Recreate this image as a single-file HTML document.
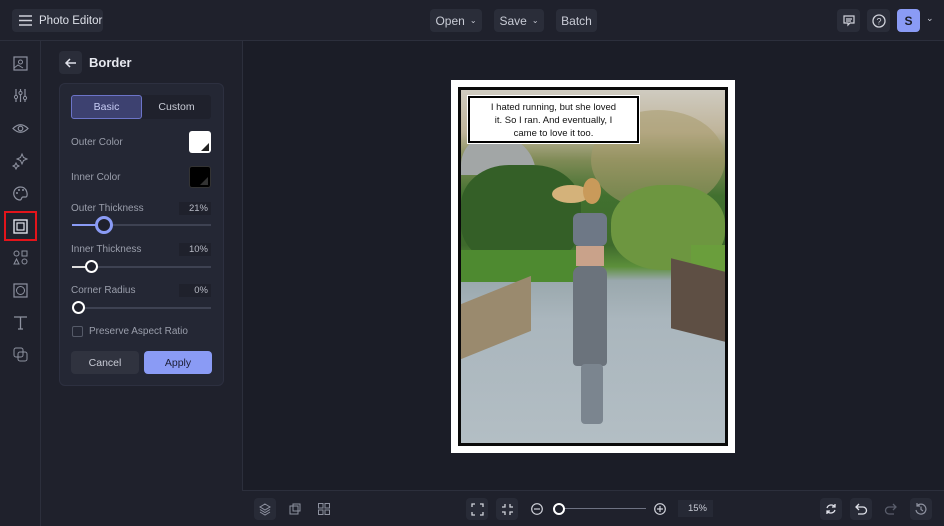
<!DOCTYPE html>
<html><head><meta charset="utf-8"><style>
*{margin:0;padding:0;box-sizing:border-box}
body{width:944px;height:526px;background:#1b1d27;font-family:"Liberation Sans",sans-serif;color:#d6d8e0;position:relative;overflow:hidden;font-size:11px}
.top{position:absolute;left:0;top:0;width:944px;height:41px;background:#1f212c;border-bottom:1px solid #2c2f3c}
.btn{position:absolute;background:#2a2d39;border-radius:4px;color:#c9ccd6;font-size:12px;display:flex;align-items:center;justify-content:center;white-space:nowrap}
.side{position:absolute;left:0;top:41px;width:41px;height:485px;background:#1f212c;border-right:1px solid #2c2f3c}
.panel{position:absolute;left:41px;top:41px;width:202px;height:485px;background:#1f212c;border-right:1px solid #2c2f3c}
.card{position:absolute;left:59px;top:83px;width:165px;height:303px;background:#242734;border:1px solid #2d3040;border-radius:6px}
.lbl{position:absolute;left:71px;color:#9a9eab;font-size:10px}
.val{position:absolute;left:179px;width:32px;height:13px;background:#1f212c;color:#b8bbc6;font-size:9.5px;text-align:right;padding-right:3px;line-height:13px}
.track{position:absolute;left:72px;width:139px;height:2px;background:#3e4252}
.knob{position:absolute;border-radius:50%;background:#1f212c;border:2px solid #fff}
.bot{position:absolute;left:242px;top:490px;width:702px;height:36px;background:#1f212c;border-top:1px solid #2c2f3c}
.ib{position:absolute;width:22px;height:22px;background:#282b37;border-radius:4px}
.ico{position:absolute;left:12px;width:17px;height:17px}
svg{overflow:visible}
</style></head><body>
<div class="top">
 <div class="btn" style="left:12px;top:9px;width:91px;height:23px;justify-content:flex-start;padding-left:7px">
  <svg width="13" height="11" viewBox="0 0 13 11"><path d="M0 1H13M0 5.5H13M0 10H13" stroke="#d0d2da" stroke-width="1.4"/></svg>
  <span style="margin-left:7px;color:#dde0e8;font-size:11.5px">Photo Editor</span></div>
 <div class="btn" style="left:430px;top:9px;width:52px;height:23px">Open <span style="font-size:8px;margin-left:5px">⌄</span></div>
 <div class="btn" style="left:494px;top:9px;width:50px;height:23px">Save <span style="font-size:8px;margin-left:5px">⌄</span></div>
 <div class="btn" style="left:556px;top:9px;width:41px;height:23px">Batch</div>
 <div class="btn" style="left:837px;top:9px;width:23px;height:23px"><svg width="12" height="12" viewBox="0 0 12 12"><path d="M1 1H11V8H7L5 10V8H1Z M3 4H9M3 6H8" fill="none" stroke="#d0d2da" stroke-width="1.2"/></svg></div>
 <div class="btn" style="left:867px;top:9px;width:23px;height:23px"><svg width="14" height="14"><circle cx="7" cy="7" r="6" fill="none" stroke="#d0d2da" stroke-width="1.3"/><text x="7" y="10.5" font-size="9" text-anchor="middle" fill="#d0d2da" font-family="Liberation Sans">?</text></svg></div>
 <div class="btn" style="left:897px;top:9px;width:23px;height:23px;background:#8a9bf5;color:#1b1d27;font-weight:bold;font-size:12px">S</div>
 <div style="position:absolute;left:926px;top:13px;font-size:9px;color:#c9ccd6">⌄</div>
</div>
<div class="side">
 <svg class="ico" style="top:14px" viewBox="0 0 17 17"><rect x="2" y="2" width="13" height="13" fill="none" stroke="#8e92a0" stroke-width="1.2"/><circle cx="8.5" cy="7" r="2" fill="none" stroke="#8e92a0"/><path d="M2 13L6 10L11 13" fill="none" stroke="#8e92a0"/></svg>
 <svg class="ico" style="top:46px" viewBox="0 0 17 17"><path d="M4 2V15M8.5 2V15M13 2V15" stroke="#8e92a0" stroke-width="1.2"/><circle cx="4" cy="10" r="1.6" fill="#1f212c" stroke="#8e92a0"/><circle cx="8.5" cy="6" r="1.6" fill="#1f212c" stroke="#8e92a0"/><circle cx="13" cy="11" r="1.6" fill="#1f212c" stroke="#8e92a0"/></svg>
 <svg class="ico" style="top:79px" viewBox="0 0 17 17"><path d="M1 8.5Q8.5 1 16 8.5Q8.5 16 1 8.5Z" fill="none" stroke="#8e92a0" stroke-width="1.2"/><circle cx="8.5" cy="8.5" r="2.3" fill="none" stroke="#8e92a0" stroke-width="1.2"/></svg>
 <svg class="ico" style="top:111px" viewBox="0 0 17 17"><path d="M10 2L11.5 5.5L15 7L11.5 8.5L10 12L8.5 8.5L5 7L8.5 5.5Z M4 11L5 13L7 14L5 15L4 17L3 15L1 14L3 13Z" fill="none" stroke="#8e92a0"/></svg>
 <svg class="ico" style="top:144px" viewBox="0 0 17 17"><path d="M8.5 2A6.5 6.5 0 1 0 8 15C10 15 9 12 11 12H14C16 12 16 2 8.5 2Z" fill="none" stroke="#8e92a0" stroke-width="1.2"/><circle cx="5" cy="8" r="1" fill="#8e92a0"/><circle cx="7" cy="5" r="1" fill="#8e92a0"/><circle cx="11" cy="5" r="1" fill="#8e92a0"/></svg>
 <div style="position:absolute;left:4px;top:170px;width:33px;height:30px;border:2px solid #e3141b"></div>
 <svg class="ico" style="top:177px" viewBox="0 0 17 17"><rect x="2" y="2" width="13" height="13" fill="none" stroke="#e0e2ea" stroke-width="1.4"/><rect x="5" y="5" width="7" height="7" fill="none" stroke="#e0e2ea" stroke-width="1.2"/></svg>
 <svg class="ico" style="top:208px" viewBox="0 0 17 17"><circle cx="4.5" cy="4.5" r="2.5" fill="none" stroke="#8e92a0"/><rect x="10" y="2" width="5" height="5" fill="none" stroke="#8e92a0"/><path d="M4.5 10L7 15H2Z" fill="none" stroke="#8e92a0"/><circle cx="12.5" cy="12.5" r="2.5" fill="none" stroke="#8e92a0"/></svg>
 <svg class="ico" style="top:241px" viewBox="0 0 17 17"><rect x="2" y="2" width="13" height="13" fill="none" stroke="#8e92a0" stroke-width="1.2"/><circle cx="8.5" cy="8.5" r="4" fill="none" stroke="#8e92a0"/></svg>
 <svg class="ico" style="top:273px" viewBox="0 0 17 17"><path d="M2 3H15M8.5 3V15M6 15H11" fill="none" stroke="#8e92a0" stroke-width="1.3"/></svg>
 <svg class="ico" style="top:305px" viewBox="0 0 17 17"><rect x="2" y="2" width="9" height="9" rx="2" fill="none" stroke="#8e92a0"/><rect x="6" y="6" width="9" height="9" rx="2" fill="none" stroke="#8e92a0"/></svg>
</div>
<div class="panel"></div>
<div class="btn" style="left:59px;top:51px;width:23px;height:23px"><svg width="12" height="10" viewBox="0 0 12 10"><path d="M11 5H1M5 1L1 5L5 9" fill="none" stroke="#e0e2ea" stroke-width="1.5"/></svg></div>
<div style="position:absolute;left:89px;top:55px;font-size:13px;font-weight:bold;color:#e6e8ef">Border</div>
<div class="card"></div>
<div style="position:absolute;left:71px;top:95px;width:140px;height:24px;background:#1f212c;border-radius:3px"></div>
<div style="position:absolute;left:71px;top:95px;width:71px;height:24px;background:#3d4170;border:1px solid #6c74c8;border-radius:3px;color:#c8cdf5;font-size:10.5px;text-align:center;line-height:22px">Basic</div>
<div style="position:absolute;left:142px;top:95px;width:69px;height:24px;color:#c9ccd6;font-size:10.5px;text-align:center;line-height:24px">Custom</div>
<div class="lbl" style="top:137px">Outer Color</div>
<div style="position:absolute;left:189px;top:131px;width:22px;height:22px;background:#fff;border-radius:3px;overflow:hidden"><div style="position:absolute;right:2px;bottom:2px;width:0;height:0;border-left:8px solid transparent;border-bottom:8px solid #222"></div></div>
<div class="lbl" style="top:172px">Inner Color</div>
<div style="position:absolute;left:189px;top:166px;width:22px;height:22px;background:#000;border-radius:3px;border:1px solid #333"><div style="position:absolute;right:2px;bottom:2px;width:0;height:0;border-left:8px solid transparent;border-bottom:8px solid #333"></div></div>
<div class="lbl" style="top:203px">Outer Thickness</div><div class="val" style="top:202px">21%</div>
<div class="track" style="top:224px"></div><div class="track" style="top:224px;width:32px;background:#8a9bf5"></div>
<div class="knob" style="left:95px;top:216px;width:18px;height:18px;border:3px solid #8a9bf5"></div>
<div class="lbl" style="top:244px">Inner Thickness</div><div class="val" style="top:243px">10%</div>
<div class="track" style="top:266px"></div><div class="track" style="top:266px;width:16px;background:#ddd"></div>
<div class="knob" style="left:85px;top:260px;width:13px;height:13px"></div>
<div class="lbl" style="top:285px">Corner Radius</div><div class="val" style="top:284px">0%</div>
<div class="track" style="top:307px"></div>
<div class="knob" style="left:72px;top:301px;width:13px;height:13px"></div>
<div style="position:absolute;left:72px;top:326px;width:11px;height:11px;border:1px solid #555a68;border-radius:2px"></div>
<div class="lbl" style="left:89px;top:326px">Preserve Aspect Ratio</div>
<div class="btn" style="left:71px;top:351px;width:68px;height:23px;background:#30333f;font-size:10.5px">Cancel</div>
<div class="btn" style="left:144px;top:351px;width:68px;height:23px;background:#8a9bf5;color:#1b1d35;font-size:10.5px">Apply</div>

<div style="position:absolute;left:451px;top:80px;width:284px;height:373px;background:#fff"></div>
<div style="position:absolute;left:458px;top:87px;width:270px;height:359px;background:#0a0a0a"></div>
<div style="position:absolute;left:461px;top:90px;width:264px;height:353px;overflow:hidden;background:linear-gradient(180deg,#cfcbc0 0%,#bfb49a 12%,#7e8a55 20%,#41702f 30%,#3e6a2c 44%,#5c8f3a 50%,#9aa8ad 54%,#aab6bd 65%,#b3bec4 100%)">
 <div style="position:absolute;left:0;top:45px;width:75px;height:40px;background:#a2a6a6;border-radius:30px 40px 0 0"></div>
 <div style="position:absolute;left:0;top:75px;width:120px;height:100px;background:#345f27;border-radius:40%"></div>
 <div style="position:absolute;left:130px;top:20px;width:134px;height:100px;background:#a89a6c;border-radius:50%;opacity:.55"></div>
 <div style="position:absolute;left:150px;top:95px;width:114px;height:85px;background:#6d9640;border-radius:45%"></div>
 <div style="position:absolute;left:0;top:160px;width:130px;height:32px;background:#4e8a30"></div>
 <div style="position:absolute;left:230px;top:155px;width:34px;height:35px;background:#6a9e3c"></div>
 <div style="position:absolute;left:210px;top:175px;width:54px;height:70px;background:#5e4f44;transform:skewY(14deg)"></div>
 <div style="position:absolute;left:0;top:200px;width:70px;height:55px;background:#9a8a6e;transform:skewY(-22deg)"></div>
 <div style="position:absolute;left:91px;top:95px;width:38px;height:18px;background:#d4b27a;border-radius:50%"></div>
 <div style="position:absolute;left:122px;top:88px;width:18px;height:26px;background:#c99a5a;border-radius:50%"></div>
 <div style="position:absolute;left:112px;top:123px;width:34px;height:33px;background:#6e7886;border-radius:6px"></div>
 <div style="position:absolute;left:115px;top:156px;width:28px;height:20px;background:#c9a28a"></div>
 <div style="position:absolute;left:112px;top:176px;width:34px;height:100px;background:#6b737c;border-radius:8px 8px 4px 4px"></div>
 <div style="position:absolute;left:120px;top:274px;width:22px;height:60px;background:#7b858f;border-radius:4px"></div>
</div>
<div style="position:absolute;left:468px;top:96px;width:171px;height:47px;background:#fff;border:2px solid #000;outline:1px solid #fff;color:#111;font-size:9.5px;text-align:center;line-height:13px;padding-top:3px;white-space:nowrap">I hated running, but she loved<br>it. So I ran. And eventually, I<br>came to love it too.</div>

<div class="bot">
 <div class="ib" style="left:12px;top:7px"></div><div class="ib" style="left:41px;top:7px;background:none"></div><div class="ib" style="left:71px;top:7px;background:none"></div>
 <svg style="position:absolute;left:17px;top:12px" width="12" height="12" viewBox="0 0 12 12"><path d="M6 1L11 4L6 7L1 4Z M1 6.5L6 9.5L11 6.5M1 9L6 12L11 9" fill="none" stroke="#8e92a0"/></svg>
 <svg style="position:absolute;left:47px;top:12px" width="12" height="12"><rect x="1" y="3" width="8" height="8" fill="none" stroke="#8e92a0"/><rect x="4" y="1" width="7" height="7" fill="none" stroke="#8e92a0"/></svg>
 <svg style="position:absolute;left:76px;top:12px" width="12" height="12"><rect x="0.5" y="0.5" width="4.5" height="4.5" fill="none" stroke="#8e92a0"/><rect x="7" y="0.5" width="4.5" height="4.5" fill="none" stroke="#8e92a0"/><rect x="0.5" y="7" width="4.5" height="4.5" fill="none" stroke="#8e92a0"/><rect x="7" y="7" width="4.5" height="4.5" fill="none" stroke="#8e92a0"/></svg>
 <div class="ib" style="left:224px;top:7px"></div><div class="ib" style="left:254px;top:7px"></div>
 <svg style="position:absolute;left:230px;top:13px" width="11" height="11"><path d="M0 3V0H3M8 0H11V3M11 8V11H8M3 11H0V8" fill="none" stroke="#d0d2da" stroke-width="1.3"/></svg>
 <svg style="position:absolute;left:260px;top:13px" width="11" height="11"><path d="M0 3H3V0M8 0V3H11M11 8H8V11M3 11V8H0" fill="none" stroke="#d0d2da" stroke-width="1.3"/></svg>
 <svg style="position:absolute;left:289px;top:12px" width="12" height="12"><circle cx="6" cy="6" r="5.3" fill="none" stroke="#d0d2da" stroke-width="1.2"/><path d="M3 6H9" stroke="#d0d2da" stroke-width="1.2"/></svg>
 <div style="position:absolute;left:318px;top:17px;width:86px;height:1px;background:#6e7282"></div>
 <div style="position:absolute;left:311px;top:12px;width:12px;height:12px;border:2px solid #fff;border-radius:50%;background:#1f212c"></div>
 <svg style="position:absolute;left:412px;top:12px" width="12" height="12"><circle cx="6" cy="6" r="5.3" fill="none" stroke="#d0d2da" stroke-width="1.2"/><path d="M3 6H9M6 3V9" stroke="#d0d2da" stroke-width="1.2"/></svg>
 <div style="position:absolute;left:436px;top:9px;width:35px;height:17px;background:#262935;color:#c9ccd6;font-size:9.5px;text-align:right;padding-right:6px;line-height:17px">15%</div>
 <div class="ib" style="left:578px;top:7px"></div><div class="ib" style="left:608px;top:7px"></div><div class="ib" style="left:638px;top:7px;background:none"></div><div class="ib" style="left:668px;top:7px"></div>
 <svg style="position:absolute;left:583px;top:12px" width="12" height="12"><path d="M10 4A4.5 4.5 0 0 0 2 5M2 8A4.5 4.5 0 0 0 10 7M10 1V4H7M2 11V8H5" fill="none" stroke="#e0e2ea" stroke-width="1.3"/></svg>
 <svg style="position:absolute;left:613px;top:12px" width="12" height="12"><path d="M4 1L1 4L4 7M1 4H8A3.5 3.5 0 0 1 8 11H3" fill="none" stroke="#e0e2ea" stroke-width="1.3"/></svg>
 <svg style="position:absolute;left:643px;top:12px" width="12" height="12"><path d="M8 1L11 4L8 7M11 4H4A3.5 3.5 0 0 0 4 11H9" fill="none" stroke="#5a5e6c" stroke-width="1.3"/></svg>
 <svg style="position:absolute;left:673px;top:12px" width="12" height="12"><path d="M2 3A5 5 0 1 1 1 7M2 0V3H5M6 3.5V6.5L8 8" fill="none" stroke="#8e92a0" stroke-width="1.2"/></svg>
</div>
</body></html>
